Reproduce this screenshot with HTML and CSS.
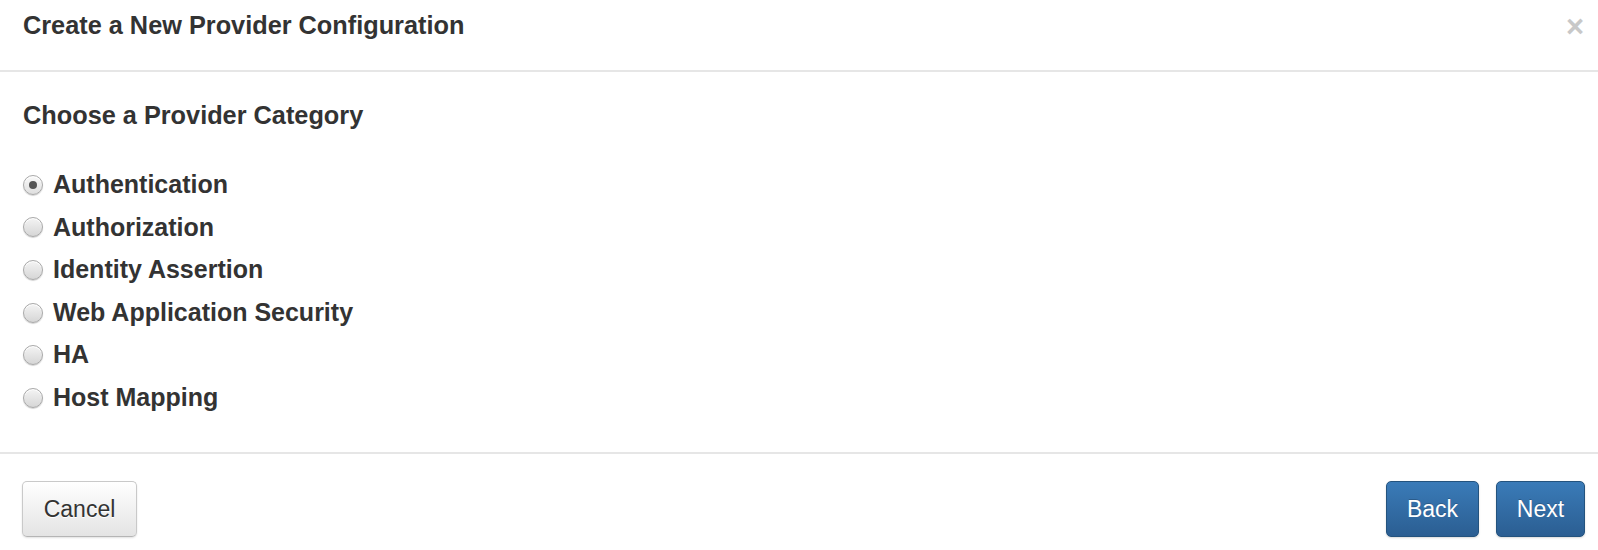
FILE: index.html
```html
<!DOCTYPE html>
<html>
<head>
<meta charset="utf-8">
<link rel="stylesheet" href="styles.css">
</head>
<body>
<div class="modal">
  <div class="modal-header">
    <h4 class="modal-title">Create a New Provider Configuration</h4>
    <button class="close" type="button">×</button>
  </div>
  <div class="modal-body">
    <h4 class="section-title">Choose a Provider Category</h4>
    <ul class="radio-list">
      <li><label><input type="radio" name="cat" checked><span>Authentication</span></label></li>
      <li><label><input type="radio" name="cat"><span>Authorization</span></label></li>
      <li><label><input type="radio" name="cat"><span>Identity Assertion</span></label></li>
      <li><label><input type="radio" name="cat"><span>Web Application Security</span></label></li>
      <li><label><input type="radio" name="cat"><span>HA</span></label></li>
      <li><label><input type="radio" name="cat"><span>Host Mapping</span></label></li>
    </ul>
  </div>
  <div class="modal-footer">
    <button class="btn btn-default" type="button">Cancel</button>
    <div class="right-buttons">
      <button class="btn btn-primary" type="button">Back</button>
      <button class="btn btn-primary" type="button">Next</button>
    </div>
  </div>
</div>
</body>
</html>
```
FILE: styles.css
```css
html, body {
  margin: 0;
  padding: 0;
  background: #fff;
}
body {
  font-family: "Liberation Sans", Arial, Helvetica, sans-serif;
  color: #333;
}
.modal {
  width: 1598px;
  height: 550px;
  display: flex;
  flex-direction: column;
}
.modal-header {
  height: 72px;
  box-sizing: border-box;
  padding: 11px 14px 0 23px;
  border-bottom: 2px solid #e6e6e6;
  display: flex;
  justify-content: space-between;
  align-items: flex-start;
  flex: none;
}
.modal-title,
.section-title {
  margin: 0;
  font-size: 25.3px;
  line-height: 28px;
  font-weight: bold;
}
.close {
  border: 0;
  background: none;
  padding: 0;
  margin: 2px 0 0 0;
  font-family: "Liberation Sans", Arial, sans-serif;
  font-size: 31px;
  line-height: 28px;
  font-weight: bold;
  color: #c8c8c8;
  cursor: pointer;
}
.modal-body {
  height: 380px;
  box-sizing: border-box;
  padding: 29px 23px 0 22px;
  flex: none;
}
.section-title {
  padding-left: 1px;
}
.radio-list {
  list-style: none;
  margin: 34px 0 0 0;
  padding: 0;
}
.radio-list li {
  height: 42.6px;
  line-height: 42.6px;
}
.radio-list label {
  display: flex;
  align-items: center;
  font-size: 25px;
  font-weight: bold;
  cursor: pointer;
}
.radio-list input {
  -webkit-appearance: none;
  appearance: none;
  width: 20px;
  height: 20px;
  margin: 1px 10px 0 1px;
  border-radius: 50%;
  border: 1px solid #a9a9a9;
  box-sizing: border-box;
  background: linear-gradient(#f4f4f4, #d6d6d6);
  box-shadow: 0 1px 1px rgba(0, 0, 0, 0.18), inset 0 1px 0 #fff;
  position: relative;
  flex: none;
}
.radio-list input:checked {
  background: linear-gradient(#fafafa, #dedede);
}
.radio-list input:checked::after {
  content: "";
  position: absolute;
  left: 5px;
  top: 5px;
  width: 8px;
  height: 8px;
  border-radius: 50%;
  background: #555;
}
.modal-footer {
  flex: 1;
  border-top: 2px solid #e6e6e6;
  padding: 27px 13px 0 22px;
  display: flex;
  justify-content: space-between;
  align-items: flex-start;
}
.right-buttons {
  display: flex;
  gap: 17px;
}
.btn {
  height: 56px;
  box-sizing: border-box;
  padding: 0 19px;
  font-family: "Liberation Sans", Arial, sans-serif;
  font-size: 23px;
  line-height: 54px;
  border-radius: 5px;
  cursor: pointer;
}
.btn-default {
  width: 115px;
  color: #333;
  border: 1px solid #c9c9c9;
  border-bottom-color: #b5b5b5;
  background: linear-gradient(#ffffff, #e4e4e4);
  text-shadow: 0 1px 0 #fff;
  box-shadow: 0 1px 2px rgba(0, 0, 0, 0.12);
}
.btn-primary {
  color: #fff;
  border: 1px solid #24537e;
  background: linear-gradient(#3a7bb8, #2b5e92);
  text-shadow: 0 -1px 0 rgba(0, 0, 0, 0.2);
  box-shadow: 0 1px 2px rgba(0, 0, 0, 0.15);
}
.btn-primary:first-child {
  width: 93px;
}
.btn-primary:last-child {
  width: 89px;
}
```
